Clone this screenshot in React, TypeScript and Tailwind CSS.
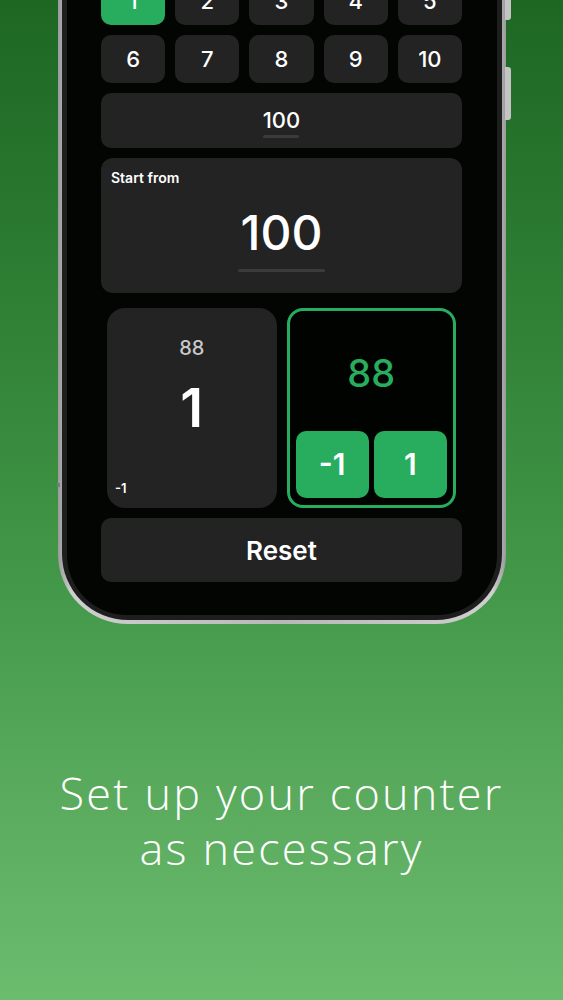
import React from "react";

const ui = { fontFamily: "Inter, 'Noto Sans', sans-serif" };

function NumBtn({ n, active }: { n: string; active?: boolean }) {
  return (
    <div
      className={`h-[48px] rounded-[10px] flex items-center justify-center text-white text-[22px] font-medium ${
        active ? "bg-[#28ad5f]" : "bg-[#232323]"
      }`}
    >
      {n}
    </div>
  );
}

export default function App() {
  return (
    <div
      className="w-[563px] h-[1000px] overflow-hidden flex flex-col bg-[linear-gradient(180deg,#1d6723_0%,#2f7f35_30%,#429848_58%,#5aab5e_80%,#6bbc6d_100%)]"
      style={ui}
    >
      {/* Phone */}
      <div className="relative ml-[58px] w-[448px] h-[700px] -mt-[76px] shrink-0">
        {/* side buttons */}
        <div className="absolute right-[-5px] top-[30px] w-[6px] h-[66px] rounded-r-[3px] bg-[#c4c4c4]" />
        <div className="absolute right-[-5px] top-[143px] w-[6px] h-[53px] rounded-r-[3px] bg-[#c4c4c4]" />
        <div className="absolute left-[-1px] top-[559px] w-[3px] h-[4px] bg-[#7a7a7a]" />
        <div className="h-full w-full rounded-b-[70px] bg-[linear-gradient(90deg,#9a9a9a,#cfcfcf_3%,#b8b8b8_50%,#cfcfcf_97%,#9a9a9a)] p-[4px] pt-0">
          <div className="h-full w-full rounded-b-[66px] bg-[#1e1e1e] p-[5px] pt-0">
            <div className="h-full w-full rounded-b-[60px] bg-[#030503] flex flex-col justify-end pl-[34px] pr-[35px] pb-[33px]">
              {/* number grid */}
              <div className="grid grid-cols-5 gap-x-[10px] gap-y-[10px]">
                <NumBtn n="1" active />
                <NumBtn n="2" />
                <NumBtn n="3" />
                <NumBtn n="4" />
                <NumBtn n="5" />
                <NumBtn n="6" />
                <NumBtn n="7" />
                <NumBtn n="8" />
                <NumBtn n="9" />
                <NumBtn n="10" />
              </div>
              {/* input bar */}
              <div className="mt-[10px] h-[55px] rounded-[10px] bg-[#232323] flex items-center justify-center">
                <div className="flex flex-col items-center pt-[4px]">
                  <span className="text-white text-[22px] font-medium leading-[26px]">100</span>
                  <div className="mt-[2px] w-[36px] h-[3px] bg-[#3b3b3b] rounded-full" />
                </div>
              </div>
              {/* start from */}
              <div className="mt-[10px] h-[135px] rounded-[12px] bg-[#232323] flex flex-col">
                <div className="pl-[10px] pt-[11px] text-white text-[14px] font-semibold leading-[18px]">Start from</div>
                <div className="flex flex-col items-center mt-[19px]">
                  <span className="text-white text-[48px] font-medium leading-[54px]">100</span>
                  <div className="mt-[9px] w-[87px] h-[3px] bg-[#3b3b3b] rounded-full" />
                </div>
              </div>
              {/* counters */}
              <div className="mt-[15px] px-[6px] grid grid-cols-2 gap-[10px]">
                <div className="relative h-[200px] rounded-[18px] bg-[#232323] flex flex-col items-center">
                  <span className="mt-[28px] text-[#c9c9c9] text-[20px] font-medium leading-[24px]">88</span>
                  <span className="mt-[18px] text-white text-[54px] font-semibold leading-[60px]">1</span>
                  <span className="absolute left-[8px] bottom-[12px] text-white text-[13px] font-semibold leading-[16px]">-1</span>
                </div>
                <div className="h-[200px] rounded-[16px] border-[3px] border-[#28ad5f] bg-[#010301] flex flex-col">
                  <div className="flex-1 flex items-center justify-center pt-[4px]">
                    <span className="text-[#28ad5f] text-[38px] font-medium leading-[44px]">88</span>
                  </div>
                  <div className="px-[6px] pb-[7px] grid grid-cols-2 gap-[5px]">
                    <div className="h-[67px] rounded-[10px] bg-[#28ad5f] flex items-center justify-center text-white text-[30px] font-semibold">-1</div>
                    <div className="h-[67px] rounded-[10px] bg-[#28ad5f] flex items-center justify-center text-white text-[30px] font-semibold">1</div>
                  </div>
                </div>
              </div>
              {/* reset */}
              <div className="mt-[10px] h-[64px] rounded-[10px] bg-[#232323] flex items-center justify-center text-white text-[26px] font-semibold">
                Reset
              </div>
            </div>
          </div>
        </div>
      </div>
      {/* caption */}
      <div
        className="mt-[141px] text-center text-white text-[45px] font-light leading-[55px] tracking-[2.2px]"
        style={{ fontFamily: "'Open Sans', 'Noto Sans', sans-serif" }}
      >
        Set up your counter
        <br />
        as necessary
      </div>
    </div>
  );
}
